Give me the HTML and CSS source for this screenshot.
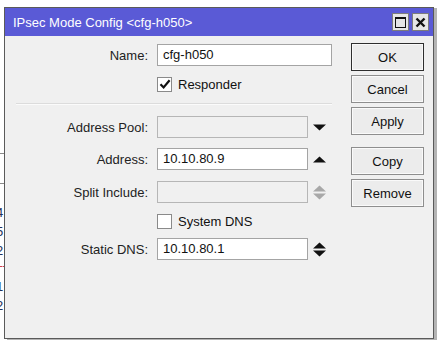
FILE: index.html
```html
<!DOCTYPE html>
<html lang="en">
<head>
    <meta charset="UTF-8">
    <meta name="viewport" content="width=device-width, initial-scale=1.0">
    <title>IPsec Mode Config</title>
    <link rel="stylesheet" href="styles.css">
</head>
<body>
<div class="desk">
    <!-- bits of the window behind, cut off at the left -->
    <div class="behind">
        <div class="gap-a"></div>
        <div class="hline"></div>
        <div class="gap-b"></div>
        <div class="hline"></div>
        <div class="digits">
            <span>4</span><span>5</span><span>2</span>
            <i class="dash"></i>
            <span>1</span><span>2</span>
        </div>
    </div>

    <div class="window">
        <div class="titlebar">
            <span class="title">IPsec Mode Config &lt;cfg-h050&gt;</span>
            <div class="winbtns">
                <span class="winbtn"><span class="maxbox"></span></span>
                <span class="winbtn">
                    <svg width="11" height="11" viewBox="0 0 11 11"><path d="M1.5 1.5 L9.5 9.5 M9.5 1.5 L1.5 9.5" stroke="#111" stroke-width="2.4"/></svg>
                </span>
            </div>
        </div>

        <div class="content">
            <div class="form">
                <div class="row r-name">
                    <label class="lbl">Name:</label>
                    <div class="field wide">cfg-h050</div>
                </div>
                <div class="row check r-resp">
                    <span class="box">
                        <svg width="12" height="12" viewBox="0 0 12 12"><path d="M1.5 6.2 L4.6 9.4 L10.6 2.2" fill="none" stroke="#111" stroke-width="2.2"/></svg>
                    </span>
                    <span>Responder</span>
                </div>
                <div class="sep"></div>
                <div class="row r-pool">
                    <label class="lbl">Address Pool:</label>
                    <div class="field off"></div>
                    <svg class="arrow" width="13" height="15" viewBox="0 0 13 15"><path d="M0 4.5 H13 L6.5 10.5 Z" fill="#111"/></svg>
                </div>
                <div class="row r-addr">
                    <label class="lbl">Address:</label>
                    <div class="field">10.10.80.9</div>
                    <svg class="arrow" width="13" height="15" viewBox="0 0 13 15"><path d="M0 10.5 H13 L6.5 4.5 Z" fill="#111"/></svg>
                </div>
                <div class="row r-split">
                    <label class="lbl">Split Include:</label>
                    <div class="field off"></div>
                    <svg class="arrow" width="13" height="15" viewBox="0 0 13 15"><path d="M0 6.5 H13 L6.5 0.5 Z" fill="#a8a8a8"/><path d="M0 8.5 H13 L6.5 14.5 Z" fill="#a8a8a8"/></svg>
                </div>
                <div class="row check r-sys">
                    <span class="box"></span>
                    <span>System DNS</span>
                </div>
                <div class="row r-dns">
                    <label class="lbl">Static DNS:</label>
                    <div class="field">10.10.80.1</div>
                    <svg class="arrow" width="13" height="15" viewBox="0 0 13 15"><path d="M0 6.5 H13 L6.5 0.5 Z" fill="#111"/><path d="M0 8.5 H13 L6.5 14.5 Z" fill="#111"/></svg>
                </div>
            </div>

            <div class="buttons">
                <button type="button" class="btn default">OK</button>
                <button type="button" class="btn">Cancel</button>
                <button type="button" class="btn">Apply</button>
                <button type="button" class="btn spaced">Copy</button>
                <button type="button" class="btn">Remove</button>
            </div>
        </div>
    </div>
</div>
</body>
</html>
```

FILE: styles.css
```css
body {
    margin: 0;
    background: #ffffff;
    font-family: "Liberation Sans", Arial, sans-serif;
    font-size: 13px;
    color: #111;
}

.desk {
    display: flex;
    padding-top: 7px;
    height: 334px;
}

.behind {
    width: 4px;
    overflow: hidden;
    flex: none;
}
.gap-a { height: 146px; }
.gap-b { height: 29px; }
.hline {
    height: 1px;
    width: 10px;
    background: #8a8a8a;
}
.digits {
    padding-top: 19px;
    display: flex;
    flex-direction: column;
    margin-left: -4px;
    line-height: 19px;
    font-size: 13px;
    color: #22305a;
}
.dash {
    display: block;
    height: 0;
    width: 10px;
    border-top: 1px dashed #d04050;
    margin: 6px 0 10px;
}

.window {
    width: 428px;
    height: 330px;
    border: 1px solid #5a5a5a;
    background: #f0f0f0;
    box-shadow: 3px 1px 0 #b4b4b4;
    display: flex;
    flex-direction: column;
}

.titlebar {
    height: 28px;
    background: #5a5ad6;
    display: flex;
    align-items: center;
    padding-left: 8px;
    padding-right: 4px;
    flex: none;
}
.title {
    color: #fff;
    font-size: 13px;
    flex: 1;
}
.winbtns {
    display: flex;
    gap: 3px;
}
.winbtn {
    width: 15px;
    height: 16px;
    background: #e6e6e6;
    border: 1px solid #7c7c7c;
    display: flex;
    align-items: center;
    justify-content: center;
}
.maxbox {
    width: 9px;
    height: 8px;
    border: 1px solid #111;
    border-top-width: 2px;
}

.content {
    display: flex;
    padding-left: 11px;
    gap: 19px;
}

.form {
    width: 316px;
    padding-top: 8px;
}
.row {
    display: flex;
    align-items: center;
    height: 22px;
}
.lbl {
    width: 132px;
    text-align: right;
    margin-right: 9px;
    color: #222;
}
.field {
    box-sizing: border-box;
    width: 151px;
    height: 22px;
    border: 1px solid #a4a4a4;
    background: #fff;
    padding-left: 5px;
    line-height: 20px;
}
.field.wide { width: 175px; }
.field.off {
    background: #f0f0f0;
    border-color: #b6b6b6;
}
.arrow {
    margin-left: 5px;
}

.check {
    height: 18px;
    padding-left: 141px;
}
.box {
    box-sizing: border-box;
    width: 15px;
    height: 15px;
    border: 1px solid #8a8a8a;
    background: #fff;
    margin-right: 6px;
    display: flex;
    align-items: center;
    justify-content: center;
}

.r-resp { margin-top: 9px; }
.sep {
    height: 1px;
    background: #dcdcdc;
    border-bottom: 1px solid #fbfbfb;
    margin-top: 10px;
}
.r-pool { margin-top: 11px; }
.r-addr { margin-top: 10px; }
.r-split { margin-top: 11px; }
.r-sys { margin-top: 9px; }
.r-dns { margin-top: 8px; }

.buttons {
    width: 73px;
    padding-top: 7px;
    display: flex;
    flex-direction: column;
    gap: 4px;
}
.btn {
    height: 28px;
    margin: 0;
    padding: 0;
    font-family: "Liberation Sans", Arial, sans-serif;
    font-size: 13px;
    color: #111;
    background: #ececec;
    border: 1px solid #8e8e8e;
    box-shadow: inset 0 0 0 1px #fafafa;
}
.btn.default {
    border-color: #2e2e2e;
}
.btn.spaced {
    margin-top: 8px;
}
```
